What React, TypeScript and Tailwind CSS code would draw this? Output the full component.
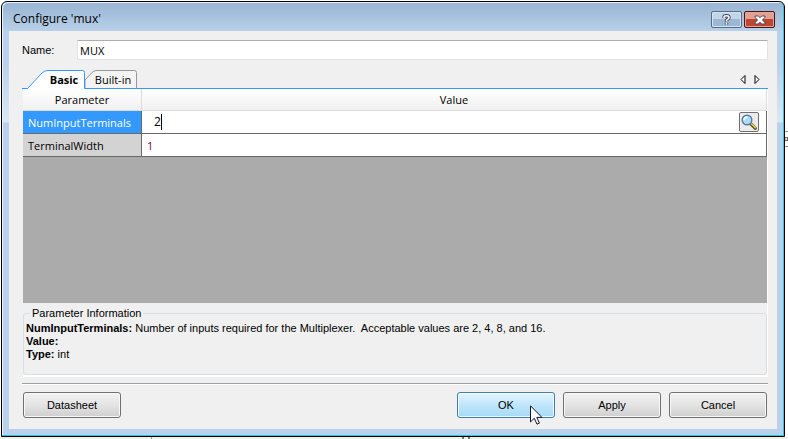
import { useState } from "react";

const segoe = "font-['Open_Sans','Noto_Sans',sans-serif]";
const sans = "font-['Liberation_Sans',Arial,sans-serif]";

function DialogButton({ label, hot = false }: { label: string; hot?: boolean }) {
  const look = hot
    ? "border-[#3c7fb1] bg-linear-to-b from-[#e6f5fd] from-0% via-[#bee6fd] via-50% to-[#a7d9f5]"
    : "border-[#707070] bg-linear-to-b from-[#f2f2f2] from-0% via-[#e4e4e4] via-50% to-[#cfcfcf]";
  return (
    <button
      type="button"
      className={`h-[26px] w-[98px] rounded-[3px] border text-[11px] leading-4 shadow-[inset_0_0_0_1px_#f6f9fb] ${look}`}
    >
      {label}
    </button>
  );
}

function Cursor() {
  return (
    <svg className="pointer-events-none absolute left-[73px] top-[13px]" width="13" height="20" viewBox="0 0 13 20" aria-hidden="true">
      <path d="M.5.8v16.1l3.800-3.600 2.700 5.900 2.400-1.100-2.600-5.700h5.100z" fill="#fff" stroke="#10142c" />
    </svg>
  );
}

function Magnifier() {
  return (
    <svg width="16" height="16" viewBox="0 0 16 16" aria-hidden="true">
      <path d="M10 10l4.300 4.300" stroke="#5d5232" strokeWidth="3.200" strokeLinecap="round" />
      <path d="M10.400 9.800l4 4" stroke="#f0c850" strokeWidth="1.600" strokeLinecap="round" />
      <circle cx="6" cy="6" r="4.800" fill="#a9dcf7" stroke="#55799c" strokeWidth="1.400" />
      <path d="M3 6.200A3.200 3.200 0 0 1 6.400 3" stroke="#fff" strokeWidth="1.500" fill="none" />
    </svg>
  );
}

function TabArrow({ path, label }: { path: string; label: string }) {
  return (
    <button type="button" aria-label={label} className="flex h-[18px] w-[14px] items-center justify-center">
      <svg width="6" height="9" viewBox="0 0 6 9" aria-hidden="true">
        <path d={path} fill="#fff" stroke="#000" />
      </svg>
    </button>
  );
}

export default function App() {
  const [name, setName] = useState("MUX");
  const [terminals, setTerminals] = useState("2");
  const [width, setWidth] = useState("1");
  const [tab, setTab] = useState("basic");

  return (
    <div className={`relative flex min-h-screen flex-col overflow-hidden bg-white pb-[2px] pl-px pr-[3px] pt-px text-[11px] leading-[13px] text-black ${sans}`}>
      <div className="absolute -right-[2px] top-[131px] h-4 w-[6px] border-y border-[#999] bg-white text-[8px] leading-[14px]">α</div>
      <div className="absolute inset-x-0 bottom-0 h-[2px] bg-[#f0f0f0]" />
      <div className="absolute bottom-0 left-[462px] h-[2px] w-2 border-x-2 border-[#777]" />
      <div className="absolute bottom-0 left-[151px] h-[2px] w-px bg-[#999]" />

      <main className="relative flex flex-1 flex-col rounded-t-[6px] border border-black bg-[linear-gradient(to_bottom,#98b4d2_0,#b9d1ea_30px,#b9d1ea_60px,#dbe7f4_120px,#b9d1ea_121px)] px-[7px] pb-[7px] shadow-[inset_-1px_-1px_0_#35c4e0,inset_1px_1px_0_#e8f2fb]">
        <header className="flex h-[29px] items-start justify-between pl-1 pr-[2px]">
          <h1 className={`pt-[9px] text-xs leading-4 ${segoe}`}>Configure 'mux'</h1>
          <div className="flex gap-[2px] pt-[9px]">
            <button type="button" aria-label="Help" className="flex h-[17px] w-[31px] items-center justify-center rounded-[2px] border border-[#566b85] bg-linear-to-b from-[#c2d5e9] from-50% to-[#9cb7d4] to-50% shadow-[inset_0_0_0_1px_#d5e3f1]">
              <svg width="9" height="12" viewBox="0 0 9 12" aria-hidden="true">
                <path d="M2 4V3.200Q2 1.700 4.400 1.700T7 3.400Q7 4.600 5.600 5.300T4.500 7.400M4.500 8.800v1.600" fill="none" stroke="#474c66" strokeWidth="3.400" />
                <path d="M2 4V3.200Q2 1.700 4.400 1.700T7 3.400Q7 4.600 5.600 5.300T4.500 7.400M4.500 8.800v1.600" fill="none" stroke="#fff" strokeWidth="1.500" />
              </svg>
            </button>
            <button type="button" aria-label="Close" className="flex h-[17px] w-[31px] items-center justify-center rounded-[2px] border border-[#48141c] bg-linear-to-b from-[#e5a093] from-50% to-[#bd4630] to-50% shadow-[inset_0_0_0_1px_#e3a79a]">
              <svg width="12" height="10" viewBox="0 0 12 10" aria-hidden="true">
                <path d="M1 1h3.200L6 2.800 7.800 1H11v1.200L8.500 5 11 7.800V9H7.800L6 7.200 4.200 9H1V7.800L3.500 5 1 2.200z" fill="#fff" stroke="#4d4a5c" />
              </svg>
            </button>
          </div>
        </header>

        <div className="flex flex-1 flex-col bg-[#f0f0f0] pb-[11px] pl-[13px] pr-[9px] pt-[9px]">
          <div className="flex items-center">
            <label htmlFor="name" className="w-[55px]">Name:</label>
            <input
              id="name"
              value={name}
              onChange={(e) => setName(e.target.value)}
              className={`h-5 min-w-0 flex-1 border border-[#e2e3ea] border-t-[#abadb3] bg-white px-[2px] text-[11px] leading-4 outline-none ${segoe}`}
            />
          </div>

          <div className="mt-[10px] flex justify-between">
            <div role="tablist" className="flex">
              <button
                type="button"
                role="tab"
                aria-selected={tab === "basic"}
                onClick={() => setTab("basic")}
                className={`relative h-[18px] w-[63px] pl-[21px] text-[11px] font-bold leading-5 ${segoe}`}
              >
                <svg className="absolute inset-0" width="63" height="19" viewBox="0 0 63 19" aria-hidden="true">
                  <path d="M5.500 18.500L20 3Q22.500.5 26 .5H60.500Q62.500.5 62.500 2.500V19H5.500z" fill="#fff" />
                  <path d="M0 18.500H5.500L20 3Q22.500.5 26 .5H60.500Q62.500.5 62.500 2.500V18.500" fill="none" stroke="#3399ff" />
                </svg>
                <span className="relative">Basic</span>
              </button>
              <button
                type="button"
                role="tab"
                aria-selected={tab === "built-in"}
                onClick={() => setTab("built-in")}
                className={`relative h-[18px] w-[52px] pl-1 text-[11px] leading-5 ${segoe}`}
              >
                <svg className="absolute inset-0" width="52" height="18" viewBox="0 0 52 18" aria-hidden="true">
                  <path d="M0 18V10L7 2.500Q9 .5 12 .5H49.500Q51.500.5 51.500 2.500V18" fill="#f4f4f4" stroke="#979797" />
                </svg>
                <span className="relative">Built-in</span>
              </button>
            </div>
            <div className="flex pr-1">
              <TabArrow label="Previous tab" path="M5 .5v8L1 4.500z" />
              <TabArrow label="Next tab" path="M1 .5v8l4-4z" />
            </div>
          </div>

          <div className="flex flex-1 flex-col border-t border-[#3399ff] pl-px">
            <div className="min-h-[213px] flex-1 border-r border-white bg-[#ababab]">
              <table className={`w-full table-fixed border-separate border-spacing-0 text-[11px] leading-4 ${segoe}`}>
                <colgroup>
                  <col className="w-[119px]" />
                  <col />
                </colgroup>
                <thead>
                  <tr className="h-[22px] bg-linear-to-b from-white to-[#f0f0f0]">
                    <th scope="col" className="border-b border-r border-[#dcdcdc] p-0 font-normal">Parameter</th>
                    <th scope="col" className="border-b border-r border-[#dcdcdc] p-0 font-normal">Value</th>
                  </tr>
                </thead>
                <tbody>
                  <tr className="h-[23px] bg-white">
                    <th scope="row" className="border-b border-r border-[#696969] bg-[#3399ff] p-0 pl-[5px] pt-px text-left font-normal text-white">
                      NumInputTerminals
                    </th>
                    <td className="border-b border-r border-[#696969] p-0">
                      <div className="flex h-[22px] items-center justify-between pl-[12px] pr-[7px]">
                        <div className="flex items-center text-xs">
                          <input
                            aria-label="NumInputTerminals"
                            value={terminals}
                            onChange={(e) => setTerminals(e.target.value)}
                            className="w-[7px] bg-transparent leading-4 outline-none"
                          />
                          <span className="h-4 w-px bg-black" />
                        </div>
                        <button type="button" aria-label="Browse" className="flex h-5 w-5 items-center justify-center rounded-[2px] border border-[#707070] bg-[#ececec]">
                          <Magnifier />
                        </button>
                      </div>
                    </td>
                  </tr>
                  <tr className="h-[23px] bg-white">
                    <th scope="row" className="border-b border-r border-[#696969] bg-[#d3d3d3] p-0 pl-[5px] pt-px text-left font-normal">
                      TerminalWidth
                    </th>
                    <td className="border-b border-r border-[#696969] p-0 pl-[5px] pt-px">
                      <input
                        aria-label="TerminalWidth"
                        value={width}
                        onChange={(e) => setWidth(e.target.value)}
                        className="block w-full bg-transparent leading-4 text-[#800040] outline-none"
                      />
                    </td>
                  </tr>
                </tbody>
              </table>
            </div>

            <div className="border-b-2 border-r border-white pt-1">
              <fieldset className="h-[68px] min-w-0 rounded-[3px] border border-[#d5dfe5] px-[2px]">
                <legend className="ml-1 px-[2px]">Parameter Information</legend>
                <div className="pt-[2px]">
                  <p><b>NumInputTerminals:</b> Number of inputs required for the Multiplexer.&nbsp; Acceptable values are 2, 4, 8, and 16.</p>
                  <p><b>Value:</b></p>
                  <p><b>Type:</b> int</p>
                </div>
              </fieldset>
            </div>
          </div>

          <div className="mt-[6px] border-b border-t border-b-white border-t-[#a0a0a0]" />

          <div className="mt-[7px] flex items-center justify-between pl-px pr-px">
            <DialogButton label="Datasheet" />
            <div className="flex gap-2">
              <div className="relative flex">
                <DialogButton label="OK" hot />
                <Cursor />
              </div>
              <DialogButton label="Apply" />
              <DialogButton label="Cancel" />
            </div>
          </div>
        </div>
      </main>
    </div>
  );
}
